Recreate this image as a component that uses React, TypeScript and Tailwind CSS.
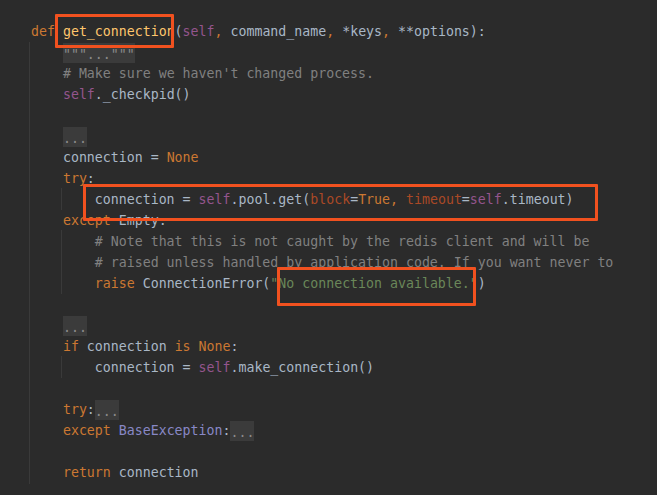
import React from 'react';

type Tok = [string, string?];

const C = {
  kw: 'text-[#cc7832]',
  fn: 'text-[#ffc66d]',
  self: 'text-[#94558d]',
  cm: 'text-[#808080]',
  str: 'text-[#6a8759]',
  arg: 'text-[#aa4926]',
  bi: 'text-[#8888c6]',
  fold: 'fold',
};

const lines: { indent: number; toks: Tok[] }[] = [
  {
    indent: 0,
    toks: [
      ['def', C.kw], [' '], ['get_connection', C.fn], ['('], ['self', C.self], [',', C.kw],
      [' command_name'], [',', C.kw], [' *keys'], [',', C.kw], [' **options):'],
    ],
  },
  { indent: 4, toks: [['"""..."""', C.fold]] },
  { indent: 4, toks: [["# Make sure we haven't changed process.", C.cm]] },
  { indent: 4, toks: [['self', C.self], ['._checkpid()']] },
  { indent: 0, toks: [] },
  { indent: 4, toks: [['...', C.fold]] },
  { indent: 4, toks: [['connection = '], ['None', C.kw]] },
  { indent: 4, toks: [['try', C.kw], [':']] },
  {
    indent: 8,
    toks: [
      ['connection = '], ['self', C.self], ['.pool.get('], ['block', C.arg], ['='], ['True', C.kw],
      [',', C.kw], [' '], ['timeout', C.arg], ['='], ['self', C.self], ['.timeout)'],
    ],
  },
  { indent: 4, toks: [['except', C.kw], [' Empty:']] },
  { indent: 8, toks: [['# Note that this is not caught by the redis client and will be', C.cm]] },
  { indent: 8, toks: [['# raised unless handled by application code. If you want never to', C.cm]] },
  {
    indent: 8,
    toks: [['raise', C.kw], [' ConnectionError('], ['"No connection available."', C.str], [')']],
  },
  { indent: 0, toks: [] },
  { indent: 4, toks: [['...', C.fold]] },
  { indent: 4, toks: [['if', C.kw], [' connection '], ['is', C.kw], [' '], ['None', C.kw], [':']] },
  { indent: 8, toks: [['connection = '], ['self', C.self], ['.make_connection()']] },
  { indent: 0, toks: [] },
  { indent: 4, toks: [['try', C.kw], [':'], ['...', C.fold]] },
  { indent: 4, toks: [['except', C.kw], [' '], ['BaseException', C.bi], [':'], ['...', C.fold]] },
  { indent: 0, toks: [] },
  { indent: 4, toks: [['return', C.kw], [' connection']] },
];

const Token = ({ t }: { t: Tok }) => {
  const [text, cls] = t;
  if (cls === 'fold') {
    return (
      <span className="inline-block h-[20px] bg-[#3b3b3b] leading-[24px] text-[#8a8a8a]">{text}</span>
    );
  }
  return <span className={cls}>{text}</span>;
};

// indent guides: [x, top, height]
const guides: [number, number, number][] = [
  [29, 42, 442],
  [61, 188, 22],
  [61, 230, 64],
  [61, 356, 22],
];

// annotation boxes: [left, top, width, height]
const marks: [number, number, number, number][] = [
  [55, 14, 119, 34],
  [83, 184, 515, 37],
  [277, 267, 199, 39],
];

const App: React.FC = () => {
  return (
    <div className="relative w-[657px] h-[495px] overflow-hidden bg-[#2b2b2b]">
      {guides.map(([x, y, h], i) => (
        <div key={i} className="absolute w-px bg-[#3a3a3a]" style={{ left: x, top: y, height: h }} />
      ))}

      <div
        className="relative pt-[21px] pl-[31px] text-[13.25px] leading-[21px] text-[#a9b7c6] whitespace-pre"
        style={{ fontFamily: '"DejaVu Sans Mono", "Liberation Mono", monospace' }}
      >
        {lines.map((l, i) => (
          <div key={i} className="h-[21px] flex items-center">
            <span>{' '.repeat(l.indent)}</span>
            {l.toks.map((t, j) => (
              <Token key={j} t={t} />
            ))}
          </div>
        ))}
      </div>

      {marks.map(([x, y, w, h], i) => (
        <div
          key={i}
          className="absolute border-[3px] border-[#f1511f] rounded-[1px]"
          style={{ left: x, top: y, width: w, height: h }}
        />
      ))}
    </div>
  );
};

export default App;
